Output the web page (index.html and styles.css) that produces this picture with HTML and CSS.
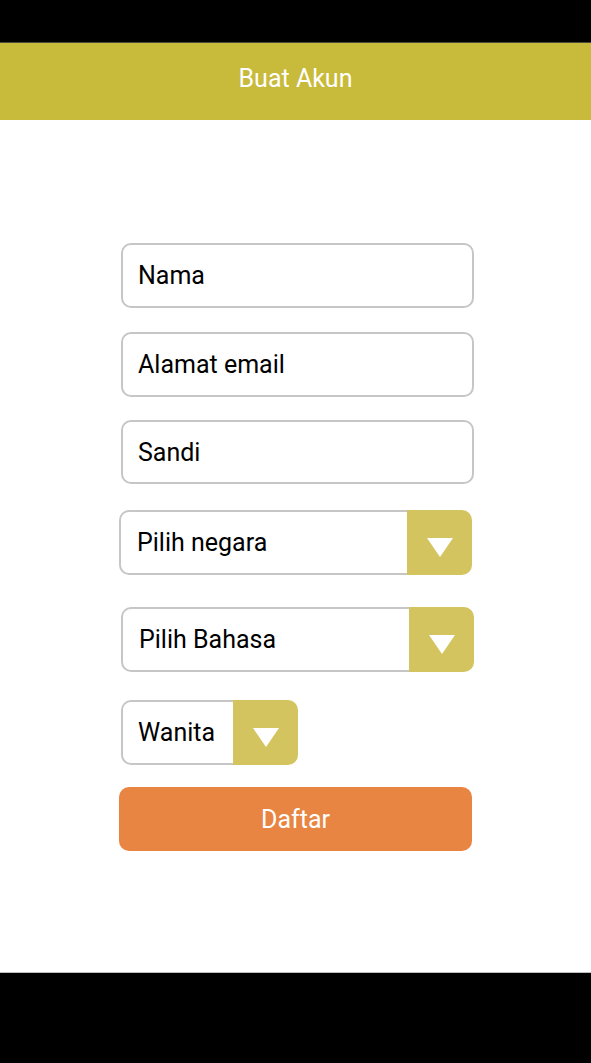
FILE: index.html
```html
<!DOCTYPE html>
<html lang="id">
<head>
<meta charset="utf-8">
<title>Buat Akun</title>
<link rel="stylesheet" href="styles.css">
</head>
<body>
<div class="screen">
  <div class="statusbar"></div>
  <header class="appbar">Buat Akun</header>
  <main class="content">
    <form class="form">
      <div class="field f-nama">Nama</div>
      <div class="field f-email">Alamat email</div>
      <div class="field f-sandi">Sandi</div>
      <div class="select f-negara">
        <span class="select-label">Pilih negara</span>
        <span class="select-btn"><span class="tri"></span></span>
      </div>
      <div class="select f-bahasa">
        <span class="select-label">Pilih Bahasa</span>
        <span class="select-btn"><span class="tri"></span></span>
      </div>
      <div class="select select-small f-gender">
        <span class="select-label">Wanita</span>
        <span class="select-btn"><span class="tri"></span></span>
      </div>
      <div class="submit">Daftar</div>
    </form>
  </main>
  <div class="navbar"></div>
</div>
</body>
</html>
```
FILE: styles.css
```css
* { box-sizing: border-box; }
html, body { margin: 0; padding: 0; }
body {
  font-family: Roboto, "Liberation Sans", sans-serif;
  background: #000;
}
.screen {
  width: 591px;
  height: 1063px;
  display: flex;
  flex-direction: column;
}
.statusbar {
  height: 43px;
  background: #000;
  border-bottom: 1px solid #4a4a3a;
}
.appbar {
  height: 77px;
  background: #c8ba3a;
  color: #fff;
  font-size: 25px;
  display: flex;
  align-items: center;
  justify-content: center;
  padding-bottom: 7px;
}
.content {
  height: 853px;
  background: #fff;
  border-bottom: 1px solid #bdbdbd;
}
.form {
  display: flex;
  flex-direction: column;
  padding-top: 123px;
}
.field {
  height: 65px;
  width: 353px;
  margin-left: 121px;
  border: 2px solid #c6c6c6;
  border-radius: 10px;
  font-size: 25px;
  color: #000;
  display: flex;
  align-items: center;
  padding-left: 15px;
}
.f-email { margin-top: 24px; }
.f-sandi { margin-top: 23px; height: 64px; }
.select {
  height: 65px;
  display: flex;
  align-items: stretch;
  font-size: 25px;
  color: #000;
}
.select-label {
  flex: 1;
  display: flex;
  align-items: center;
  padding-left: 16px;
  border: 2px solid #c6c6c6;
  border-right: none;
  border-radius: 10px 0 0 10px;
}
.select-btn {
  width: 65px;
  background: #d3c45f;
  border-radius: 0 10px 10px 0;
  display: flex;
  align-items: center;
  justify-content: center;
  padding-top: 9px;
}
.tri {
  width: 0;
  height: 0;
  border-left: 13px solid transparent;
  border-right: 13px solid transparent;
  border-top: 19px solid #fff;
}
.f-negara { margin-top: 26px; margin-left: 119px; width: 353px; }
.f-bahasa { margin-top: 32px; margin-left: 121px; width: 353px; }
.f-gender { margin-top: 28px; margin-left: 121px; width: 177px; }
.f-gender .select-label { padding-left: 15px; }
.submit {
  margin-top: 22px;
  margin-left: 119px;
  width: 353px;
  height: 64px;
  border-radius: 10px;
  background: #e98543;
  color: #fff;
  font-size: 25px;
  display: flex;
  align-items: center;
  justify-content: center;
}
.navbar {
  flex: 1;
  background: #000;
}
```
